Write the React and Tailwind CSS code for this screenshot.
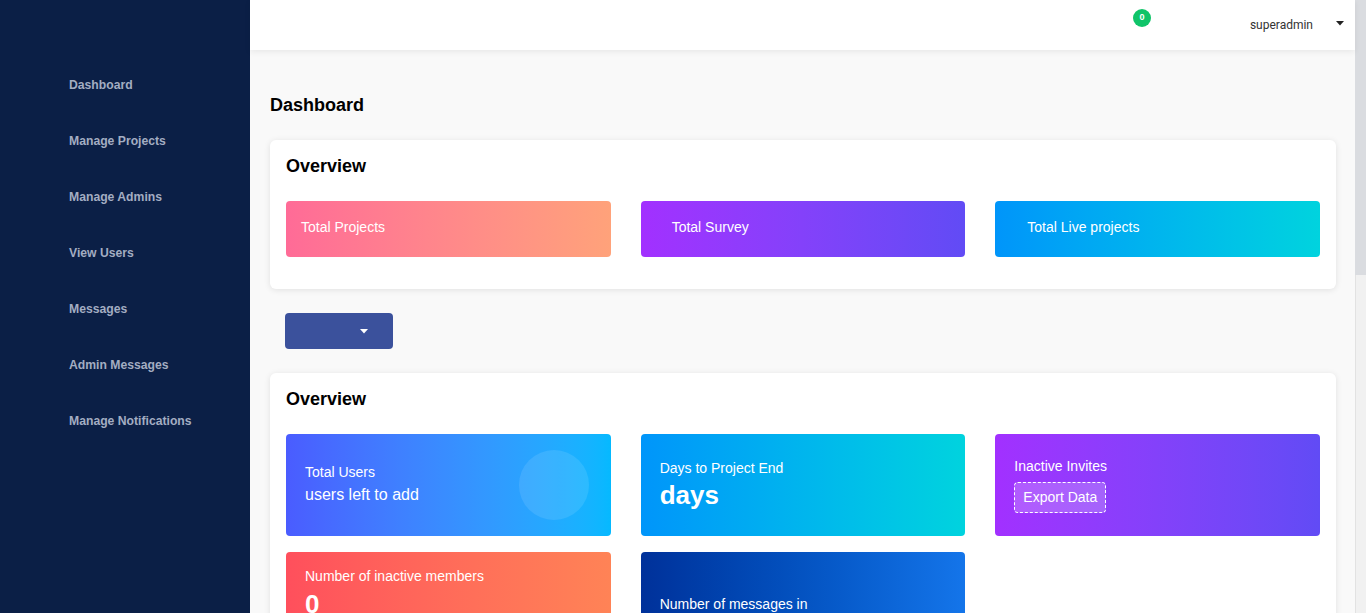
import React from "react";

const navItems = [
  "Dashboard",
  "Manage Projects",
  "Manage Admins",
  "View Users",
  "Messages",
  "Admin Messages",
  "Manage Notifications",
];

function Caret({ className }) {
  return (
    <svg className={className} width="8" height="5" viewBox="0 0 8 5">
      <path d="M0 0 L8 0 L4 4.5 Z" fill="currentColor" />
    </svg>
  );
}

export default function App() {
  return (
    <div
      className="flex h-[613px] w-[1366px] overflow-hidden bg-[#f9f9f9]"
      style={{ fontFamily: '"Liberation Sans", Arial, sans-serif' }}
    >
      {/* Sidebar */}
      <aside className="flex w-[250px] shrink-0 flex-col bg-[#0b1f46] pl-[69px] pt-[57px]">
        {navItems.map((item) => (
          <div
            key={item}
            className="flex h-[56px] items-center text-[12.2px] font-bold text-[#a3adc2]"
          >
            {item}
          </div>
        ))}
      </aside>

      {/* Main */}
      <div className="flex min-w-0 flex-1 flex-col">
        <header className="relative z-10 flex h-[50px] shrink-0 items-center bg-white shadow-[0_2px_6px_rgba(0,0,0,0.07)]">
          <div className="ml-auto flex items-center">
            <div className="mb-[15px] flex h-[18px] w-[18px] items-center justify-center rounded-full bg-[#10c469] text-[9px] font-bold text-white">
              0
            </div>
            <span
              className="ml-[99px] text-[12px] text-[#333333]"
              style={{ fontFamily: 'Roboto, "Liberation Sans", sans-serif' }}
            >
              superadmin
            </span>
            <Caret className="mb-[4px] ml-[23px] mr-[11px] text-[#222]" />
          </div>
        </header>

        <main className="flex-1 pl-[20px] pr-[19px]">
          <h1 className="mt-[43px] text-[18px] font-bold leading-[24px] text-black">
            Dashboard
          </h1>

          {/* Overview card 1 */}
          <section className="mt-[23px] rounded-[6px] bg-white px-[16px] pb-[32px] pt-[14px] shadow-[0_1px_6px_rgba(0,0,0,0.1)]">
            <h2 className="pt-[1px] text-[18px] font-bold leading-[22px] text-black">Overview</h2>
            <div className="mt-[24px] grid grid-cols-3 gap-[30px]">
              <div className="flex h-[56px] items-center rounded-[4px] bg-linear-to-r from-[#ff6b97] to-[#ffa27a] pb-[4px] pl-[15px] text-[14px] text-white">
                Total Projects
              </div>
              <div className="flex h-[56px] items-center rounded-[4px] bg-linear-to-r from-[#a230ff] to-[#614bf5] pb-[4px] pl-[31px] text-[14px] text-white">
                Total Survey
              </div>
              <div className="flex h-[56px] items-center rounded-[4px] bg-linear-to-r from-[#0095fa] to-[#00d3de] pb-[4px] pl-[32px] text-[14px] text-white">
                Total Live projects
              </div>
            </div>
          </section>

          {/* Dropdown button */}
          <button className="ml-[15px] mt-[24px] flex h-[36px] w-[108px] items-center justify-end rounded-[4px] bg-[#3b519c] pr-[25px] text-white">
            <Caret className="text-white" />
          </button>

          {/* Overview card 2 */}
          <section className="mt-[24px] rounded-[6px] bg-white px-[16px] pb-[32px] pt-[14px] shadow-[0_1px_6px_rgba(0,0,0,0.1)]">
            <h2 className="pt-[1px] text-[18px] font-bold leading-[22px] text-black">Overview</h2>
            <div className="mt-[24px] grid grid-cols-3 gap-x-[30px] gap-y-[16px]">
              <div className="relative flex h-[102px] flex-col justify-center overflow-hidden rounded-[4px] bg-linear-to-r from-[#4a5cff] to-[#05b9ff] px-[19px] pb-[2px] text-white">
                <div className="text-[14px] leading-[18px]">Total Users</div>
                <div className="mt-[3px] text-[16px] leading-[22px]">users left to add</div>
                <div className="absolute right-[22px] top-[16px] h-[70px] w-[70px] rounded-full bg-white/10" />
              </div>

              <div className="flex h-[102px] flex-col justify-center rounded-[4px] bg-linear-to-r from-[#0095fa] to-[#00d3de] px-[19px] text-white">
                <div className="text-[14px] leading-[16px]">Days to Project End</div>
                <div className="mt-[4px] text-[26px] font-bold leading-[30px]">days</div>
              </div>

              <div className="flex h-[102px] flex-col justify-center rounded-[4px] bg-linear-to-r from-[#a230ff] to-[#614bf5] px-[19px] text-white">
                <div className="text-[14px] leading-[16px]">Inactive Invites</div>
                <div className="mt-[8px] flex">
                  <span className="flex h-[31px] items-center rounded-[4px] border border-dashed border-white bg-white/20 px-[8px] text-[14px]">
                    Export Data
                  </span>
                </div>
              </div>

              <div className="flex h-[102px] flex-col rounded-[4px] bg-linear-to-r from-[#ff4f5c] to-[#ff8356] px-[19px] pt-[16px] text-white">
                <div className="text-[14px] leading-[16px]">Number of inactive members</div>
                <div className="mt-[5px] text-[26px] font-bold leading-[30px]">0</div>
              </div>

              <div className="flex h-[102px] flex-col rounded-[4px] bg-linear-to-r from-[#00319a] to-[#1475ea] px-[19px] pt-[44px] text-white">
                <div className="text-[14px] leading-[16px]">Number of messages in</div>
                <div className="mt-[5px] text-[26px] font-bold leading-[30px]">0</div>
              </div>
            </div>
          </section>
        </main>
      </div>

      {/* Scrollbar */}
      <div className="flex w-[11px] shrink-0 flex-col">
        <div className="h-[275px] bg-[#dadce0]" />
        <div className="flex-1 border-l border-[#e2e2e2] bg-[#f1f1f1]" />
      </div>
    </div>
  );
}
